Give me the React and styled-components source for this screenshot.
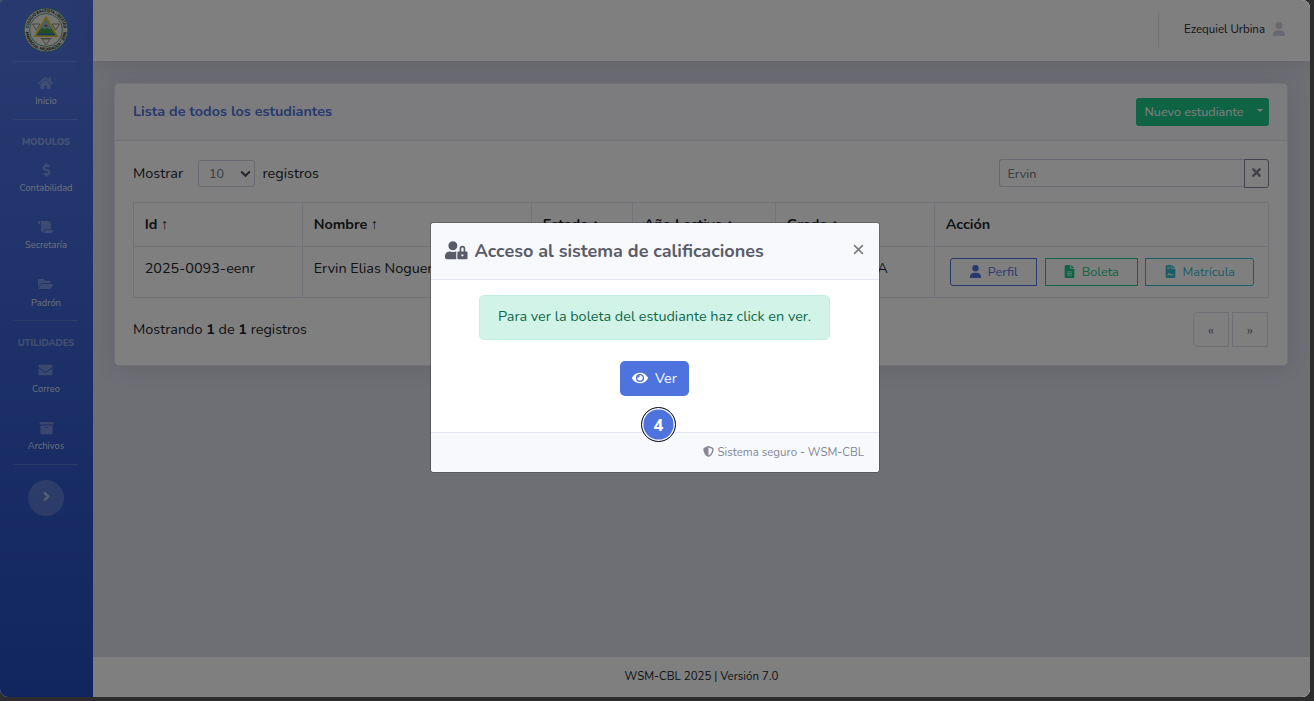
import React from "react";
import styled, { createGlobalStyle } from "styled-components";
import { FaHome, FaDollarSign, FaScroll, FaFolderOpen, FaEnvelope, FaArchive, FaAngleRight, FaUserLock, FaEye, FaTimes } from "react-icons/fa";
import { FaUser, FaFileLines, FaFileContract, FaShieldHalved } from "react-icons/fa6";

const Global = createGlobalStyle`
  * { box-sizing: border-box; }
  body { margin: 0; background: #2d2d2d; overflow: hidden; font-family: Nunito, Lato, sans-serif; font-size: 14.4px; color: #212529; }
  svg { display: block; flex: none; }
`;

const Text = styled.span`
  white-space: nowrap;
  padding-bottom: ${(p) => (p.$up ? 2 : 0)}px;
  ${(p) => p.$bold && "font-weight: 700;"}
`;

const Window = styled.div`
  position: relative;
  display: flex;
  width: 1310px;
  height: 697px;
  border-radius: 3px 8px 8px 8px;
  overflow: hidden;
  background: #dddfeb;
`;

const Backdrop = styled.div`
  position: absolute;
  inset: 0;
  background: rgba(0, 0, 0, 0.5);
  display: flex;
  justify-content: center;
  align-items: flex-start;
  padding-top: 222px;
`;

const Sidebar = styled.nav`
  width: 93px;
  flex: none;
  display: flex;
  flex-direction: column;
  align-items: center;
  padding-right: 2px;
  background: linear-gradient(180deg, #4e73df 10%, #224abe 100%);
  color: rgba(255, 255, 255, 0.8);
`;

const Brand = styled.div`
  height: 61px;
  padding-top: 7px;
`;

const Rule = styled.div`
  width: 65px;
  height: 1px;
  flex: none;
  background: rgba(255, 255, 255, 0.15);
`;

const NavItem = styled.a`
  display: flex;
  flex-direction: column;
  align-items: center;
  height: 57.3px;
  padding: ${(p) => (p.$first ? 13.5 : 14.3)}px 0 0 1px;
  gap: 4.5px;
  font-size: 9.36px;
  line-height: 14px;
  svg { width: 15px; height: 14px; color: rgba(255, 255, 255, 0.3); }
`;

const NavHeading = styled.div`
  height: 28px;
  padding: 15px 0 0 1px;
  font-size: 9.36px;
  line-height: 14px;
  font-weight: 800;
  color: rgba(255, 255, 255, 0.4);
`;

const Toggle = styled.button`
  width: 36px;
  height: 36px;
  margin-top: 15.5px;
  border: 0;
  padding: 0 0 3px 2px;
  border-radius: 50%;
  display: grid;
  place-items: center;
  background: rgba(255, 255, 255, 0.2);
  color: rgba(255, 255, 255, 0.5);
`;

const Content = styled.div`
  flex: 1;
  display: flex;
  flex-direction: column;
`;

const Topbar = styled.header`
  height: 61px;
  flex: none;
  display: flex;
  align-items: center;
  justify-content: flex-end;
  padding: 0 24px 3px 0;
  background: #fff;
  box-shadow: 0 2px 25px rgba(58, 59, 69, 0.15);
  font-size: 11.52px;
`;

const TopDivider = styled.div`
  width: 1px;
  height: 35px;
  margin-right: 25px;
  background: #e3e6f0;
`;

const UserIcon = styled.span`
  margin-left: 7px;
  color: #d1d3e2;
`;

const Main = styled.main`
  flex: 1;
  padding: 22px 22px 0 21px;
`;

const Card = styled.section`
  height: 283px;
  border: 1px solid #e3e6f0;
  border-radius: 5px;
  background: #fff;
  box-shadow: 0 2px 25px rgba(58, 59, 69, 0.15);
  overflow: hidden;
`;

const CardHeader = styled.div`
  height: 57px;
  display: flex;
  align-items: center;
  justify-content: space-between;
  padding: 0 18px;
  background: #f8f9fc;
  border-bottom: 1px solid #e3e6f0;
  color: #4e73df;
`;

const NewButton = styled.button`
  width: 133px;
  height: 28px;
  display: flex;
  align-items: center;
  justify-content: space-between;
  padding: 0 6px 1px 8.5px;
  border: 0;
  border-radius: 3px;
  background: #1cc88a;
  color: #fff;
  font: 12.6px Nunito, Lato, sans-serif;
`;

const Caret = styled.i`
  border: 3.5px solid transparent;
  border-top-color: #fff;
  border-bottom: 0;
  margin-bottom: 2px;
`;

const CardBody = styled.div`
  padding: 18px 18px 0;
`;

const Bar = styled.div`
  display: flex;
  align-items: center;
  justify-content: space-between;
  margin-top: ${(p) => p.$top || 0}px;
`;

const Group = styled.div`
  display: flex;
  align-items: center;
`;

const SelectBox = styled.div`
  width: 57px;
  height: 27px;
  margin: 0 7.5px 0 15px;
  padding: 0 3px 0 10px;
  display: flex;
  align-items: center;
  justify-content: space-between;
  border: 1px solid #d1d3e2;
  border-radius: 3px;
  color: #6e707e;
  font-size: 12.6px;
`;

const SearchBox = styled.div`
  width: 245px;
  height: 28px;
  margin-bottom: 1px;
  padding: 0 7.5px;
  display: flex;
  align-items: center;
  border: 1px solid #d1d3e2;
  border-right: 0;
  border-radius: 3px 0 0 3px;
  color: #6e707e;
  font-size: 12.6px;
`;

const ClearButton = styled.button`
  width: 25px;
  height: 29px;
  padding: 0 0 3px;
  display: grid;
  place-items: center;
  border: 1px solid #858796;
  border-radius: 0 3px 3px 0;
  background: #fff;
  color: #858796;
`;

const Table = styled.div`
  width: 1135px;
  margin-top: 14px;
  display: grid;
  grid-template-columns: 169px 229px 101px 143px 159px 334px;
  grid-template-rows: 44px 51px;
  border: 1px solid #e3e6f0;
  border-width: 1px 0 0 1px;
`;

const Cell = styled.div`
  padding: ${(p) => (p.$actions ? "11px 15px" : "10px 10.7px")};
  line-height: 22px;
  display: flex;
  align-items: flex-start;
  gap: ${(p) => (p.$actions ? 7.5 : 4)}px;
  border: 1px solid #e3e6f0;
  border-width: 0 1px 1px 0;
  white-space: nowrap;
  overflow: hidden;
`;

const Arrow = styled.span`
  font-family: "Liberation Sans", sans-serif;
  font-size: 14.4px;
  margin-left: -0.5px;
`;

const Action = styled.button`
  width: ${(p) => p.$w}px;
  height: 28px;
  flex: none;
  padding: 0 0 1px;
  display: flex;
  align-items: center;
  justify-content: center;
  gap: 5.5px;
  border: 1px solid ${(p) => p.$c};
  border-radius: ${(p) => p.$r};
  background: transparent;
  color: ${(p) => p.$c};
  font: 12.6px Nunito, Lato, sans-serif;
`;

const Pages = styled.div`
  display: flex;
  gap: 3px;
  padding-right: 1px;
`;

const PageButton = styled.span`
  width: 36px;
  height: 35px;
  display: grid;
  place-items: center;
  border: 1px solid #dddfeb;
  border-radius: ${(p) => (p.$first ? "5px 0 0 5px" : "0")};
  color: #858796;
  font-size: 14.4px;
`;

const Footer = styled.footer`
  height: 40px;
  display: flex;
  align-items: center;
  justify-content: center;
  padding-bottom: 2px;
  background: #fff;
  font-size: 11.52px;
`;

const Modal = styled.div`
  position: relative;
  width: 450px;
  height: 251px;
  border: 1px solid rgba(0, 0, 0, 0.2);
  border-radius: 4px;
  background: #fff;
  background-clip: padding-box;
  display: flex;
  flex-direction: column;
  overflow: hidden;
`;

const ModalHeader = styled.div`
  height: 57px;
  padding: 0 15.5px 2px 14px;
  display: flex;
  align-items: center;
  background: #f8f9fc;
  border-bottom: 1px solid #e3e6f0;
  color: #5a5c69;
  font-size: 18px;
`;

const ModalTitle = styled.h5`
  flex: 1;
  margin: 2px 0 0 7px;
  font-size: inherit;
  line-height: 1;
`;

const Close = styled.button`
  border: 0;
  padding: 0;
  margin-bottom: 2px;
  background: none;
  color: #7d7e80;
`;

const ModalBody = styled.div`
  flex: 1;
  display: flex;
  flex-direction: column;
  align-items: center;
  padding: 15px 1px 0 0;
`;

const Alert = styled.div`
  width: 351px;
  height: 45px;
  display: flex;
  align-items: center;
  justify-content: center;
  padding-bottom: 3px;
  border: 1px solid #bff0de;
  border-radius: 5px;
  background: #d2f4e8;
  color: #0f6848;
`;

const Primary = styled.button`
  width: 69px;
  height: 35px;
  margin-top: 21px;
  display: flex;
  align-items: center;
  justify-content: center;
  gap: 7px;
  padding: 0 0 2px;
  border: 0;
  border-radius: 5px;
  background: #4e73df;
  color: #fff;
  font: 14.4px Nunito, Lato, sans-serif;
`;

const ModalFooter = styled.div`
  height: 40px;
  padding: 0 15px 2px;
  display: flex;
  align-items: center;
  justify-content: flex-end;
  gap: 3px;
  background: #f8f9fc;
  border-top: 1px solid #e3e6f0;
  color: #858796;
  font-size: 11.52px;
`;

const Step = styled.div`
  position: absolute;
  left: 210px;
  top: 184px;
  width: 35px;
  height: 35px;
  display: grid;
  place-items: center;
  padding-bottom: 1px;
  border: 1.5px solid #14161c;
  border-radius: 50%;
  background: #4e73df;
  box-shadow: inset 0 0 0 1.4px #fff;
  color: #fff;
  font: 700 16.5px "Noto Sans", sans-serif;
`;

const Seal = () => (
  <svg width="46" height="46" viewBox="0 0 46 46">
    <defs>
      <path id="sealTop" d="M5.2 23a17.8 17.8 0 0 1 35.6 0" />
      <path id="sealBottom" d="M2.4 23a20.6 20.6 0 0 0 41.2 0" />
    </defs>
    <circle cx="23" cy="23" r="21.9" fill="#e4e4dc" stroke="#3d8579" strokeWidth=".9" />
    <circle cx="23" cy="23" r="16.4" fill="#ededE7" stroke="#3d8579" strokeWidth=".8" />
    <g fill="#111" fontFamily="Lato, sans-serif" fontWeight="900" fontSize="4.1">
      <text textLength="52" lengthAdjust="spacingAndGlyphs"><textPath href="#sealTop" startOffset="2">COLEGIO BAUTISTA LIBERTAD</textPath></text>
      <text textLength="60" lengthAdjust="spacingAndGlyphs"><textPath href="#sealBottom" startOffset="2">MANAGUA, NICARAGUA * 2000</textPath></text>
    </g>
    <g fill="none" stroke="#777" strokeWidth=".8">
      <path d="M9.5 17h7.5l-3.8 6zM29 17h7.5l-3.8 6zM19 32h8l-4 6z" />
      <path d="M17.5 31.5h11" />
    </g>
    <path d="M23 8.5 35.5 30h-25z" fill="#e3c12e" />
    <path d="M23 12.5 32.5 28.3h-19z" fill="#72c2dc" />
    <path d="M17.2 22.5 19.5 21l2 1.2 2-1.4 2.3 1.4 2.4-.5 4.2 6.6h-19z" fill="#4a9845" />
    <path d="M14.6 26.6h16.8l1.1 1.7h-19z" fill="#2f78b8" />
    <path d="M23 16.5v4" stroke="#eee" strokeWidth=".7" />
    <circle cx="23" cy="18.8" r="1.3" fill="#d63b3b" />
  </svg>
);

const Chevron = () => (
  <svg width="11" height="8" viewBox="0 0 11 8"><path d="M1.2 1.5 5.5 5.8 9.8 1.5" fill="none" stroke="#4e505e" strokeWidth="2" /></svg>
);

const Cross = () => (
  <svg width="11" height="11" viewBox="0 0 12 12"><path d="M1.2 1.2l9.6 9.6M10.8 1.2l-9.6 9.6" stroke="currentColor" strokeWidth="1.8" /></svg>
);

const headers = ["Id", "Nombre", "Estado", "Año Lectivo", "Grado"];

export default function App() {
  return (
    <>
      <Global />
      <Window>
        <Sidebar>
          <Brand><Seal /></Brand>
          <Rule />
          <NavItem $first><FaHome /><Text>Inicio</Text></NavItem>
          <Rule />
          <NavHeading>MODULOS</NavHeading>
          <NavItem><FaDollarSign /><Text>Contabilidad</Text></NavItem>
          <NavItem><FaScroll /><Text>Secretaría</Text></NavItem>
          <NavItem><FaFolderOpen /><Text>Padrón</Text></NavItem>
          <Rule />
          <NavHeading>UTILIDADES</NavHeading>
          <NavItem><FaEnvelope /><Text>Correo</Text></NavItem>
          <NavItem><FaArchive /><Text>Archivos</Text></NavItem>
          <Rule />
          <Toggle><FaAngleRight size={15} /></Toggle>
        </Sidebar>
        <Content>
          <Topbar>
            <TopDivider />
            <Text>Ezequiel Urbina</Text>
            <UserIcon><FaUser size={14} /></UserIcon>
          </Topbar>
          <Main>
            <Card>
              <CardHeader>
                <Text $bold $up>Lista de todos los estudiantes</Text>
                <NewButton><Text>Nuevo estudiante</Text><Caret /></NewButton>
              </CardHeader>
              <CardBody>
                <Bar>
                  <Group>
                    <Text $up>Mostrar</Text>
                    <SelectBox><Text>10</Text><Chevron /></SelectBox>
                    <Text $up>registros</Text>
                  </Group>
                  <Group>
                    <SearchBox><Text>Ervin</Text></SearchBox>
                    <ClearButton><FaTimes size={13} /></ClearButton>
                  </Group>
                </Bar>
                <Table>
                  {headers.map((h) => (
                    <Cell key={h}><Text $bold>{h}</Text><Arrow>↑</Arrow></Cell>
                  ))}
                  <Cell><Text $bold>Acción</Text></Cell>
                  <Cell><Text>2025-0093-eenr</Text></Cell>
                  <Cell><Text>Ervin Elias Noguera</Text></Cell>
                  <Cell />
                  <Cell />
                  <Cell><Text>Octavo grado A</Text></Cell>
                  <Cell $actions>
                    <Action $w={87} $c="#4e73df" $r="3px 0 0 3px"><FaUser size={13} /><Text>Perfil</Text></Action>
                    <Action $w={93} $c="#1cc88a" $r="0"><FaFileLines size={13} /><Text>Boleta</Text></Action>
                    <Action $w={109} $c="#36b9cc" $r="0 3px 3px 0"><FaFileContract size={13} /><Text>Matrícula</Text></Action>
                  </Cell>
                </Table>
                <Bar $top={14}>
                  <Text $up>Mostrando <b>1</b> de <b>1</b> registros</Text>
                  <Pages><PageButton $first>«</PageButton><PageButton>»</PageButton></Pages>
                </Bar>
              </CardBody>
            </Card>
          </Main>
          <Footer><Text>WSM-CBL 2025 | Versión 7.0</Text></Footer>
        </Content>
        <Backdrop>
          <Modal>
            <ModalHeader>
              <FaUserLock size={22.5} />
              <ModalTitle><Text $bold>Acceso al sistema de calificaciones</Text></ModalTitle>
              <Close><Cross /></Close>
            </ModalHeader>
            <ModalBody>
              <Alert><Text>Para ver la boleta del estudiante haz click en ver.</Text></Alert>
              <Primary><FaEye size={16} /><Text>Ver</Text></Primary>
            </ModalBody>
            <ModalFooter><FaShieldHalved size={11} /><Text>Sistema seguro - WSM-CBL</Text></ModalFooter>
            <Step>4</Step>
          </Modal>
        </Backdrop>
      </Window>
    </>
  );
}
